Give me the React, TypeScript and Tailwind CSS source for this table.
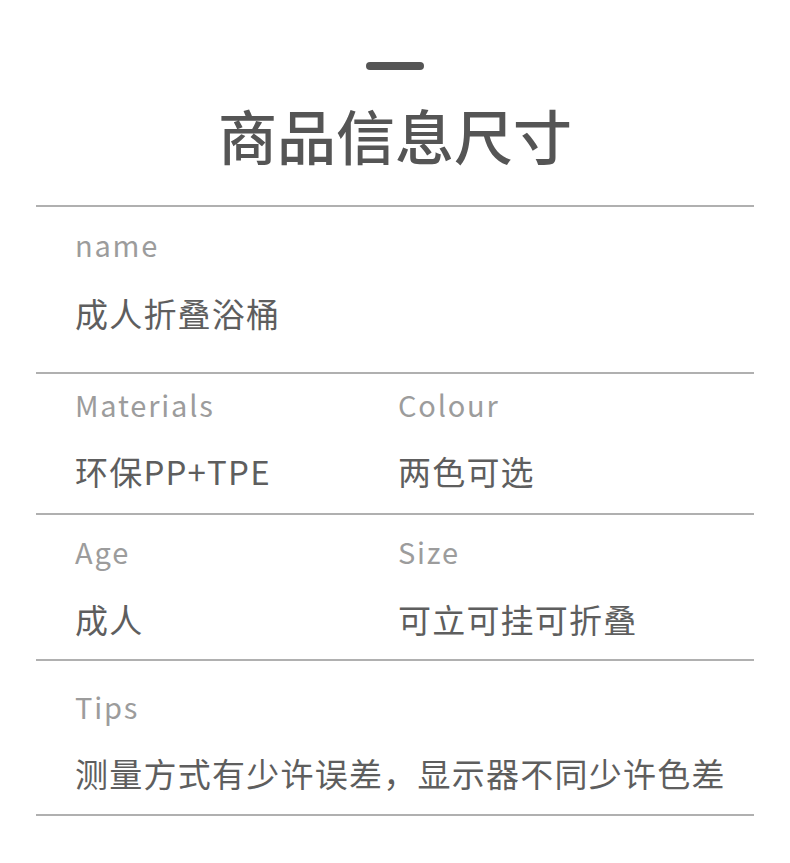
import React from "react";

const font = { fontFamily: '"Noto Sans CJK SC", "Noto Sans", sans-serif' };

function Row({
  h,
  pt,
  gap,
  cols,
}: {
  h: string;
  pt: string;
  gap: string;
  cols: { label: string; value: string; wide?: boolean }[];
}) {
  return (
    <div className={`border-t-2 border-[#b0b0b0] ${h}`}>
      <div className={`flex pl-[39px] ${pt}`}>
        {cols.map((c, i) => (
          <div key={i} className={i === 0 && cols.length > 1 ? "w-[323px]" : ""}>
            <div className="text-[29px] leading-[40px] text-[#9c9c9c] tracking-[1.8px]">{c.label}</div>
            <div
              className={`text-[33px] leading-[40px] text-[#5e5e5e] ${gap} ${
                c.wide ? "tracking-[1.25px]" : "tracking-[1.2px]"
              }`}
            >
              {c.value}
            </div>
          </div>
        ))}
      </div>
    </div>
  );
}

export default function App() {
  return (
    <div className="w-[790px] h-[863px] bg-white overflow-hidden" style={font}>
      <div className="flex flex-col items-center pt-[62px]">
        <div className="w-[58px] h-[8px] rounded-full bg-[#555555]" />
        <div className="mt-[30px] text-[59px] leading-[70px] font-medium text-[#555555]">
          商品信息尺寸
        </div>
      </div>
      <div className="mx-[36px] mt-[35px] border-b-2 border-[#b0b0b0]">
        <Row h="h-[167px]" pt="pt-[17px]" gap="mt-[29px]" cols={[{ label: "name", value: "成人折叠浴桶" }]} />
        <Row
          h="h-[141px]"
          pt="pt-[10px]"
          gap="mt-[27px]"
          cols={[
            { label: "Materials", value: "环保PP+TPE" },
            { label: "Colour", value: "两色可选" },
          ]}
        />
        <Row
          h="h-[146px]"
          pt="pt-[16px]"
          gap="mt-[28px]"
          cols={[
            { label: "Age", value: "成人" },
            { label: "Size", value: "可立可挂可折叠" },
          ]}
        />
        <Row
          h="h-[155px]"
          pt="pt-[25px]"
          gap="mt-[27px]"
          cols={[{ label: "Tips", value: "测量方式有少许误差，显示器不同少许色差", wide: true }]}
        />
      </div>
    </div>
  );
}
